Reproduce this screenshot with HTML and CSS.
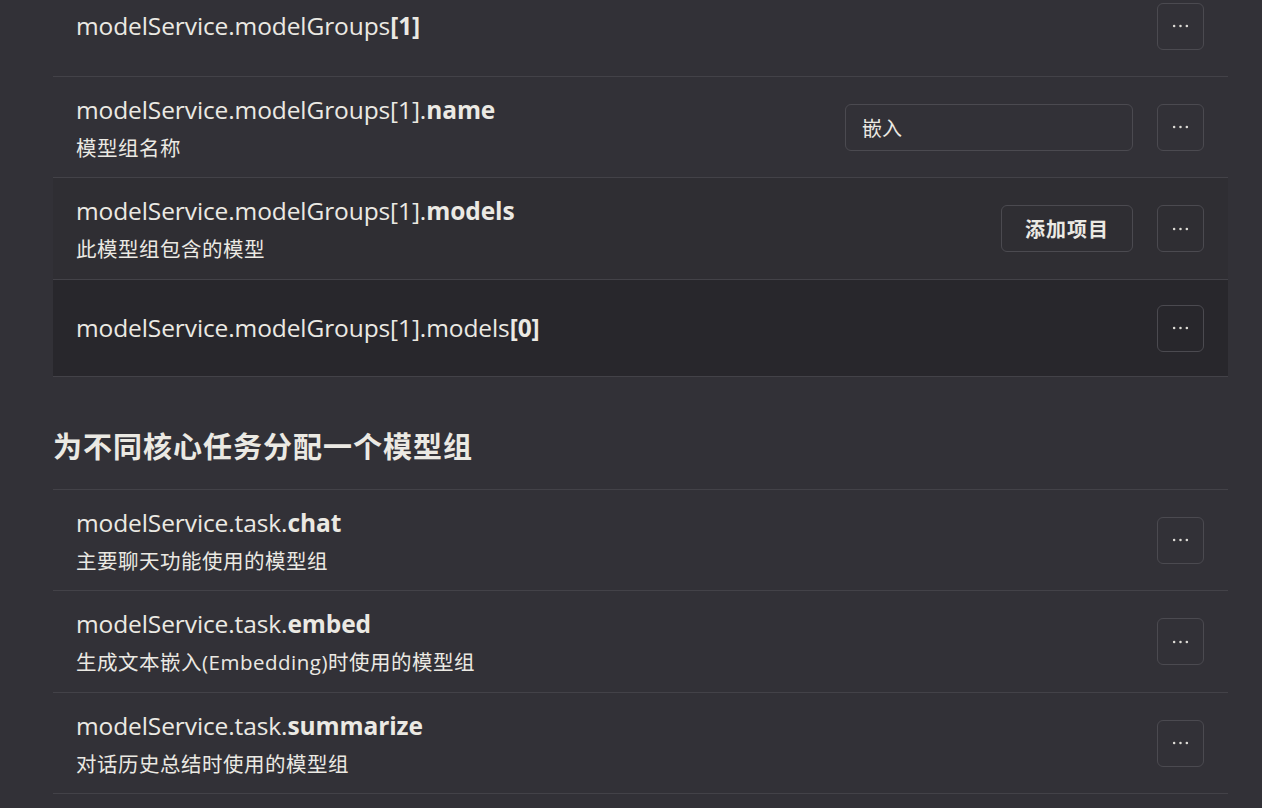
FILE: index.html
```html
<!DOCTYPE html>
<html lang="zh-CN">
<head>
<meta charset="utf-8">
<title>modelService</title>
<link rel="stylesheet" href="styles.css">
</head>
<body>
<main class="page">
  <section class="list">
    <div class="row">
      <div class="text">
        <div class="key">modelService.modelGroups<b>[1]</b></div>
      </div>
      <div class="controls">
        <button class="more" aria-label="更多"><svg viewBox="0 0 46 46" width="46" height="46"><circle cx="16.5" cy="23" r="1.3"/><circle cx="23" cy="23" r="1.3"/><circle cx="29.5" cy="23" r="1.3"/></svg></button>
      </div>
    </div>
    <div class="row">
      <div class="text">
        <div class="key">modelService.modelGroups[1].<b>name</b></div>
        <div class="desc">模型组名称</div>
      </div>
      <div class="controls">
        <input class="field" type="text" value="嵌入">
        <button class="more" aria-label="更多"><svg viewBox="0 0 46 46" width="46" height="46"><circle cx="16.5" cy="23" r="1.3"/><circle cx="23" cy="23" r="1.3"/><circle cx="29.5" cy="23" r="1.3"/></svg></button>
      </div>
    </div>
    <div class="row row-list">
      <div class="text">
        <div class="key">modelService.modelGroups[1].<b>models</b></div>
        <div class="desc">此模型组包含的模型</div>
      </div>
      <div class="controls">
        <button class="add">添加项目</button>
        <button class="more" aria-label="更多"><svg viewBox="0 0 46 46" width="46" height="46"><circle cx="16.5" cy="23" r="1.3"/><circle cx="23" cy="23" r="1.3"/><circle cx="29.5" cy="23" r="1.3"/></svg></button>
      </div>
    </div>
    <div class="row row-item">
      <div class="text">
        <div class="key">modelService.modelGroups[1].models<b>[0]</b></div>
      </div>
      <div class="controls">
        <button class="more" aria-label="更多"><svg viewBox="0 0 46 46" width="46" height="46"><circle cx="16.5" cy="23" r="1.3"/><circle cx="23" cy="23" r="1.3"/><circle cx="29.5" cy="23" r="1.3"/></svg></button>
      </div>
    </div>
  </section>

  <h2 class="section-title">为不同核心任务分配一个模型组</h2>

  <section class="list list-top">
    <div class="row">
      <div class="text">
        <div class="key">modelService.task.<b>chat</b></div>
        <div class="desc">主要聊天功能使用的模型组</div>
      </div>
      <div class="controls">
        <button class="more" aria-label="更多"><svg viewBox="0 0 46 46" width="46" height="46"><circle cx="16.5" cy="23" r="1.3"/><circle cx="23" cy="23" r="1.3"/><circle cx="29.5" cy="23" r="1.3"/></svg></button>
      </div>
    </div>
    <div class="row row-tall">
      <div class="text">
        <div class="key">modelService.task.<b>embed</b></div>
        <div class="desc">生成文本嵌入(Embedding)时使用的模型组</div>
      </div>
      <div class="controls">
        <button class="more" aria-label="更多"><svg viewBox="0 0 46 46" width="46" height="46"><circle cx="16.5" cy="23" r="1.3"/><circle cx="23" cy="23" r="1.3"/><circle cx="29.5" cy="23" r="1.3"/></svg></button>
      </div>
    </div>
    <div class="row">
      <div class="text">
        <div class="key">modelService.task.<b>summarize</b></div>
        <div class="desc">对话历史总结时使用的模型组</div>
      </div>
      <div class="controls">
        <button class="more" aria-label="更多"><svg viewBox="0 0 46 46" width="46" height="46"><circle cx="16.5" cy="23" r="1.3"/><circle cx="23" cy="23" r="1.3"/><circle cx="29.5" cy="23" r="1.3"/></svg></button>
      </div>
    </div>
  </section>
</main>
</body>
</html>
```

FILE: styles.css
```css
html, body {
  margin: 0;
  padding: 0;
  background: #323137;
  color: #ebe9e3;
  font-family: "Open Sans", "Noto Sans CJK SC", sans-serif;
  overflow: hidden;
}

.page {
  margin: -24px 34px 0 53px;
}

.list {
  display: flex;
  flex-direction: column;
}

.list-top {
  border-top: 1px solid #434248;
}

.row {
  display: flex;
  align-items: center;
  justify-content: space-between;
  padding: 0 24px 0 23px;
  border-bottom: 1px solid #434248;
  box-sizing: border-box;
  min-height: 101px;
}

.row-tall {
  min-height: 102px;
}

.row-list {
  background: #2f2e33;
  min-height: 102px;
}

.row-item {
  background: #28272c;
  min-height: 97px;
}

.text {
  display: flex;
  flex-direction: column;
  gap: 5px;
}

.key {
  font-size: 24.5px;
  line-height: 36px;
  letter-spacing: -0.1px;
}

.key b {
  font-weight: 700;
}

.desc {
  font-size: 20.5px;
  line-height: 30px;
  letter-spacing: 0.5px;
}

.controls {
  display: flex;
  align-items: center;
  gap: 24px;
}

.more {
  width: 47px;
  height: 47px;
  padding: 0;
  margin: 0;
  border: 1px solid #4b4a50;
  border-radius: 6px;
  background: transparent;
  display: flex;
  align-items: center;
  justify-content: center;
  cursor: pointer;
}

.more svg {
  fill: #dedcd6;
  display: block;
}

.field {
  width: 288px;
  height: 47px;
  box-sizing: border-box;
  padding: 0 16px;
  margin: 0;
  border: 1px solid #4b4a50;
  border-radius: 6px;
  background: transparent;
  color: #ebe9e3;
  font-family: "Noto Sans CJK SC", sans-serif;
  font-size: 20px;
  outline: none;
}

.add {
  height: 47px;
  box-sizing: border-box;
  padding: 0 23px;
  margin: 0;
  border: 1px solid #4b4a50;
  border-radius: 6px;
  background: transparent;
  color: #ebe9e3;
  font-family: "Noto Sans CJK SC", sans-serif;
  font-size: 20px;
  font-weight: 700;
  letter-spacing: 1px;
  cursor: pointer;
}

.section-title {
  margin: 0;
  padding: 49px 0 25px;
  font-family: "Noto Sans CJK SC", sans-serif;
  font-size: 29px;
  line-height: 38px;
  font-weight: 700;
  letter-spacing: 1px;
}
```
